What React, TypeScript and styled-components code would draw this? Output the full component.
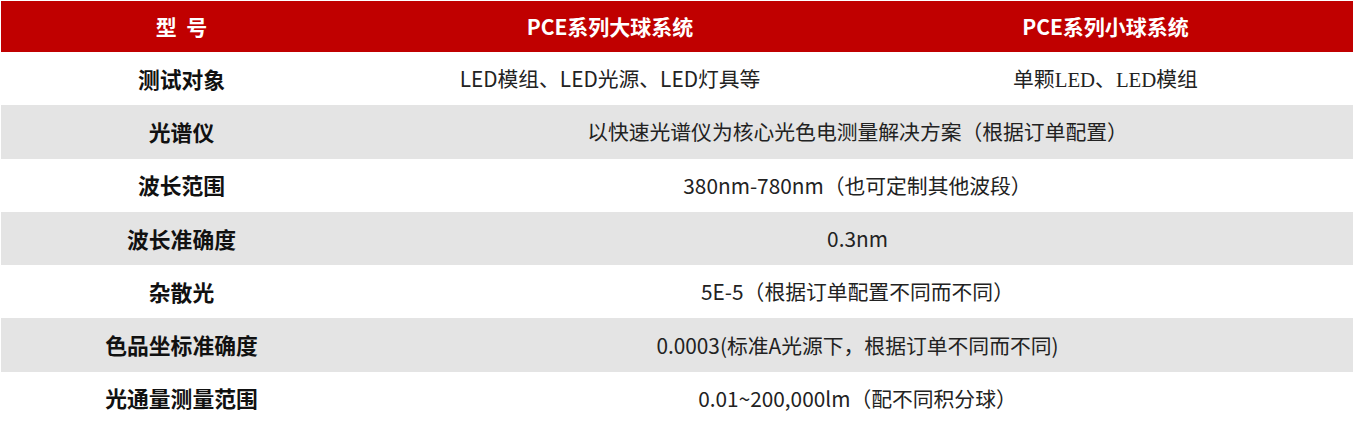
import React from "react";
import styled, { createGlobalStyle } from "styled-components";

const GlobalStyle = createGlobalStyle`
	html, body {
		margin: 0;
		padding: 0;
		background: #ffffff;
	}
`;

const Wrap = styled.div`
	padding: 1px 0 0 1px;
	width: 1352px;
`;

const Table = styled.table`
	width: 1352px;
	border-collapse: collapse;
	table-layout: fixed;
	font-family: "Noto Sans CJK SC", "Noto Sans", sans-serif;
`;

const HeadCell = styled.th`
	box-sizing: border-box;
	height: 51px;
	padding: 0 0 2px;
	background: #c00000;
	color: #ffffff;
	font-size: 21px;
	font-weight: 700;
	text-align: center;
	vertical-align: middle;
`;

const Row = styled.tr<{ $shaded: boolean }>`
	height: 53.3px;
	background: ${(p) => (p.$shaded ? "#e4e4e4" : "#ffffff")};
`;

const Label = styled.td`
	padding: 0 0 1px;
	text-align: center;
	vertical-align: middle;
	font-size: 21.8px;
	font-weight: 600;
	color: #111111;
`;

const Value = styled.td<{ $serif?: boolean }>`
	padding: 0 0 1px;
	text-align: center;
	vertical-align: middle;
	font-size: 20.8px;
	font-weight: 400;
	color: #222222;
	font-family: ${(p) =>
		p.$serif
			? `"Liberation Serif", "Noto Sans CJK SC", serif`
			: `"Noto Sans CJK SC", "Noto Sans", sans-serif`};
`;

type Spec = { label: string; big: string; small?: string };

const specs: Spec[] = [
	{ label: "测试对象", big: "LED模组、LED光源、LED灯具等", small: "单颗LED、LED模组" },
	{ label: "光谱仪", big: "以快速光谱仪为核心光色电测量解决方案（根据订单配置）" },
	{ label: "波长范围", big: "380nm-780nm（也可定制其他波段）" },
	{ label: "波长准确度", big: "0.3nm" },
	{ label: "杂散光", big: "5E-5（根据订单配置不同而不同）" },
	{ label: "色品坐标准确度", big: "0.0003(标准A光源下，根据订单不同而不同)" },
	{ label: "光通量测量范围", big: "0.01~200,000lm（配不同积分球）" },
];

export default function App() {
	return (
		<>
			<GlobalStyle />
			<Wrap>
				<Table>
					<colgroup>
						<col style={{ width: "361px" }} />
						<col style={{ width: "496px" }} />
						<col style={{ width: "495px" }} />
					</colgroup>
					<thead>
						<tr>
							<HeadCell>型&nbsp;&nbsp;号</HeadCell>
							<HeadCell>PCE系列大球系统</HeadCell>
							<HeadCell>PCE系列小球系统</HeadCell>
						</tr>
					</thead>
					<tbody>
						{specs.map((s, i) => (
							<Row key={s.label} $shaded={i % 2 === 1}>
								<Label>{s.label}</Label>
								{s.small ? (
									<>
										<Value>{s.big}</Value>
										<Value $serif>{s.small}</Value>
									</>
								) : (
									<Value colSpan={2}>{s.big}</Value>
								)}
							</Row>
						))}
					</tbody>
				</Table>
			</Wrap>
		</>
	);
}
